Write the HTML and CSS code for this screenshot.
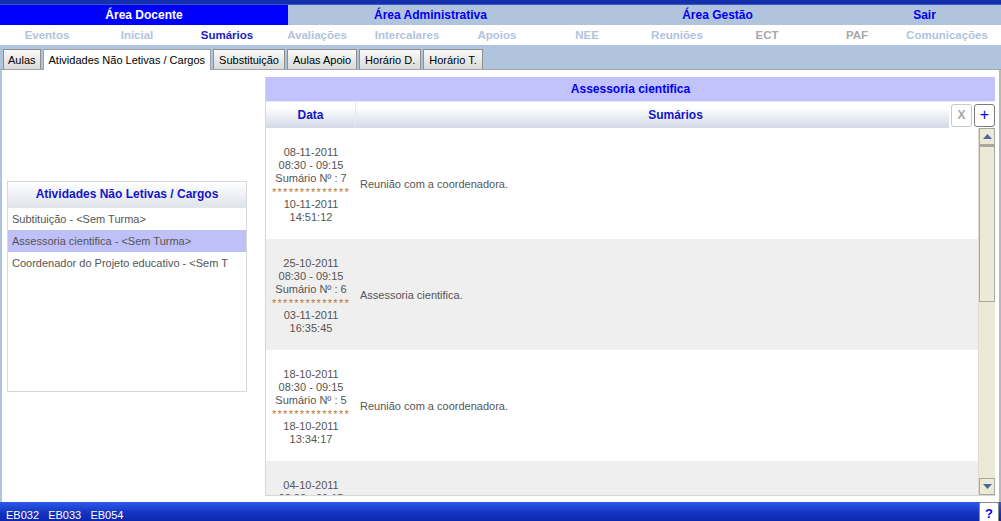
FILE: index.html
```html
<!DOCTYPE html>
<html lang="pt">
<head>
<meta charset="utf-8">
<title>Sumários</title>
<link rel="stylesheet" href="styles.css">
</head>
<body>
<div class="page">
  <div class="topline"></div>
  <div class="areas">
    <div class="area area-active w1">Área Docente</div>
    <div class="area w2">Área Administrativa</div>
    <div class="area w3">Área Gestão</div>
    <div class="area w4">Sair</div>
  </div>
  <div class="menu">
    <div class="mi">Eventos</div>
    <div class="mi">Inicial</div>
    <div class="mi mi-on">Sumários</div>
    <div class="mi">Avaliações</div>
    <div class="mi">Intercalares</div>
    <div class="mi">Apoios</div>
    <div class="mi">NEE</div>
    <div class="mi">Reuniões</div>
    <div class="mi mi-gray">ECT</div>
    <div class="mi mi-gray">PAF</div>
    <div class="mi">Comunicações</div>
  </div>
  <div class="tabs">
    <div class="tab tab-first">Aulas</div>
    <div class="tab tab-on">Atividades Não Letivas / Cargos</div>
    <div class="tab">Substituição</div>
    <div class="tab">Aulas Apoio</div>
    <div class="tab">Horário D.</div>
    <div class="tab">Horário T.</div>
  </div>
  <div class="content">
    <div class="leftcol">
      <div class="lpanel">
        <div class="lhead">Atividades Não Letivas / Cargos</div>
        <div class="litem"><span class="ltext">Subtituição - &lt;Sem Turma&gt;</span></div>
        <div class="litem litem-on"><span class="ltext">Assessoria cientifica - &lt;Sem Turma&gt;</span></div>
        <div class="litem"><span class="ltext">Coordenador do Projeto educativo - &lt;Sem Turma&gt;</span></div>
      </div>
    </div>
    <div class="rpanel">
      <div class="rtitle">Assessoria cientifica</div>
      <div class="thead">
        <div class="th th-date">Data</div>
        <div class="th th-sum">Sumários</div>
        <div class="btns">
          <div class="btn btn-x">X</div>
          <div class="btn btn-plus">+</div>
        </div>
      </div>
      <div class="tbody">
        <div class="rows">
          <div class="row">
            <div class="cdate">
              <div>08-11-2011</div>
              <div>08:30 - 09:15</div>
              <div>Sumário Nº : 7</div>
              <div class="stars">**************</div>
              <div>10-11-2011</div>
              <div>14:51:12</div>
            </div>
            <div class="csum">Reunião com a coordenadora.</div>
          </div>
          <div class="row row-alt">
            <div class="cdate">
              <div>25-10-2011</div>
              <div>08:30 - 09:15</div>
              <div>Sumário Nº : 6</div>
              <div class="stars">**************</div>
              <div>03-11-2011</div>
              <div>16:35:45</div>
            </div>
            <div class="csum">Assessoria cientifica.</div>
          </div>
          <div class="row">
            <div class="cdate">
              <div>18-10-2011</div>
              <div>08:30 - 09:15</div>
              <div>Sumário Nº : 5</div>
              <div class="stars">**************</div>
              <div>18-10-2011</div>
              <div>13:34:17</div>
            </div>
            <div class="csum">Reunião com a coordenadora.</div>
          </div>
          <div class="row row-alt">
            <div class="cdate">
              <div>04-10-2011</div>
              <div>08:30 - 09:15</div>
              <div>Sumário Nº : 4</div>
              <div class="stars">**************</div>
              <div>04-10-2011</div>
              <div>10:12:03</div>
            </div>
            <div class="csum">Reunião com a coordenadora.</div>
          </div>
        </div>
        <div class="sbar">
          <div class="sbtn"><svg width="9" height="5" viewBox="0 0 9 5"><path d="M0 5 L4.5 0 L9 5 Z" fill="#4a6a9a"/></svg></div>
          <div class="sthumb"></div>
          <div class="strack"></div>
          <div class="sbtn"><svg width="9" height="5" viewBox="0 0 9 5"><path d="M0 0 L9 0 L4.5 5 Z" fill="#4a6a9a"/></svg></div>
        </div>
      </div>
    </div>
  </div>
  <div class="footer">
    <div class="codes">EB032&nbsp;&nbsp; EB033&nbsp;&nbsp; EB054</div>
    <div class="help">?</div>
  </div>
</div>
</body>
</html>
```
FILE: styles.css
```css
* { box-sizing: border-box; }
html, body { margin: 0; padding: 0; background: #ffffff; }
body { font-family: Tahoma, "Liberation Sans", Arial, sans-serif; font-size: 11px; color: #555555; }
.page { width: 1001px; height: 521px; display: flex; flex-direction: column; overflow: hidden; }

.topline { flex: 0 0 5px; background: #1430ac; border-bottom: 1px solid #3a56c4; }

.areas { flex: 0 0 20px; display: flex; background: #b0c4de; }
.area { display: flex; align-items: center; justify-content: center; font-weight: bold; font-size: 12px; color: #0000ee; }
.area-active { background: #0000ff; color: #ffffff; }
.w1 { width: 288px; }
.w2 { width: 285px; }
.w3 { width: 289px; }
.w4 { width: 125px; }

.menu { flex: 0 0 20px; display: flex; padding-left: 2px; background: #ffffff; }
.mi { width: 90px; display: flex; align-items: center; justify-content: center; font-weight: bold; font-size: 11.5px; color: #b0c4de; }
.mi-on { color: #1c1cc8; }
.mi-gray { color: #a8a8a8; }

.tabs { flex: 0 0 25px; background: #b0c4de; display: flex; align-items: flex-end; padding-left: 3px; gap: 2px; border-bottom: 1px solid #a4a4a4; }
.tab { height: 20px; padding: 0 5px; display: flex; align-items: center; color: #000000; font-size: 11px;
  background: linear-gradient(#fafafa, #dadada); border: 1px solid #8e8e8e; border-bottom: none; }
.tab-first { padding: 0 4px; }
.tab-on { background: #ffffff; height: 21px; margin-bottom: -1px; border-color: #a0a0a0; padding: 0 5px; position: relative; }

.content { flex: 1 1 auto; min-height: 0; overflow: hidden; display: flex; background: #ffffff; border-left: 2px solid #b0c4de; border-right: 2px solid #b8b8b8; }
.leftcol { width: 263px; display: flex; align-items: center; padding-left: 5px; }
.lpanel { width: 240px; height: 211px; border: 1px solid #d8d8d8; background: #ffffff; }
.lhead { height: 26px; display: flex; align-items: center; justify-content: center; font-weight: bold; font-size: 12px; color: #1414c8;
  background: linear-gradient(#ffffff, #dfe4ec); border-bottom: 1px solid #e6e6e6; }
.litem { height: 22px; padding-left: 4px; display: flex; align-items: center; white-space: nowrap; color: #555555; font-size: 11px; }
.ltext { display: block; width: 216px; overflow: hidden; }
.litem-on { background: #c0c0f8; }

.rpanel { width: 730px; margin: 7px 0 6px 0; min-height: 0; display: flex; flex-direction: column; border-left: 1px solid #d8d8d8; border-bottom: 1px solid #d8d8d8; }
.rtitle { flex: 0 0 25px; background: #c2c2fc; display: flex; align-items: center; justify-content: center; font-weight: bold; font-size: 12px; color: #0000ee; border-bottom: 1px solid #e8e8f4; }
.thead { flex: 0 0 26px; display: flex; align-items: stretch; background: linear-gradient(#ffffff 20%, #d2dae6); position: relative; }
.th { display: flex; align-items: center; justify-content: center; font-weight: bold; font-size: 12px; color: #1414c8; }
.th-date { width: 90px; border-right: 1px solid #e4e8f0; }
.th-sum { flex: 1; }
.btns { position: absolute; right: 0; top: 0; height: 26px; display: flex; align-items: center; gap: 2px; background: #ffffff; padding-left: 2px; }
.btn { width: 21px; height: 23px; border-radius: 3px; display: flex; align-items: center; justify-content: center; font-weight: bold; background: #ffffff; }
.btn-x { border: 1px solid #c8c8c8; color: #a8a8a8; font-size: 12px; }
.btn-plus { border: 1px solid #7a7a7a; color: #0000ee; font-size: 16px; font-weight: normal; }

.tbody { flex: 1 1 auto; min-height: 0; display: flex; overflow: hidden; }
.rows { flex: 1; overflow: hidden; }
.row { height: 111px; display: flex; align-items: center; background: #ffffff; }
.row-alt { background: #efefef; }
.cdate { width: 90px; flex: 0 0 90px; text-align: center; line-height: 13px; color: #555555; font-size: 11px; padding-top: 2px; }
.cdate .stars { color: #b8783a; font-size: 11px; line-height: 12px; letter-spacing: 1.3px; height: 12px; overflow: hidden; margin: -1px 0 2px 0; padding-top: 2px; }
.csum { padding-left: 4px; color: #555555; font-size: 11px; }

.sbar { flex: 0 0 17px; display: flex; flex-direction: column; background: #ece9d8; border-left: 1px solid #e0ddd0; }
.sbtn { flex: 0 0 17px; border: 1px solid #a8a89c; background: #ece9d8; display: flex; align-items: center; justify-content: center; }
.sthumb { flex: 0 0 157px; border: 1px solid #a8a89c; border-top: 2px solid #a8a89c; background: #ece9d8; }
.strack { flex: 1; }

.footer { flex: 0 0 19px; display: flex; align-items: stretch; background: linear-gradient(#2a5ae8, #1432c0 60%, #0c28b0); }
.codes { flex: 1; color: #ffffff; font-size: 11px; padding-left: 6px; display: flex; align-items: flex-end; }
.help { width: 20px; margin-right: 2px; background: #ffffff; border: 1px solid #8a8a8a; border-bottom: none; border-radius: 2px 2px 0 0; color: #0000ee; font-weight: bold; font-size: 13px; display: flex; align-items: flex-end; justify-content: center; }
```
